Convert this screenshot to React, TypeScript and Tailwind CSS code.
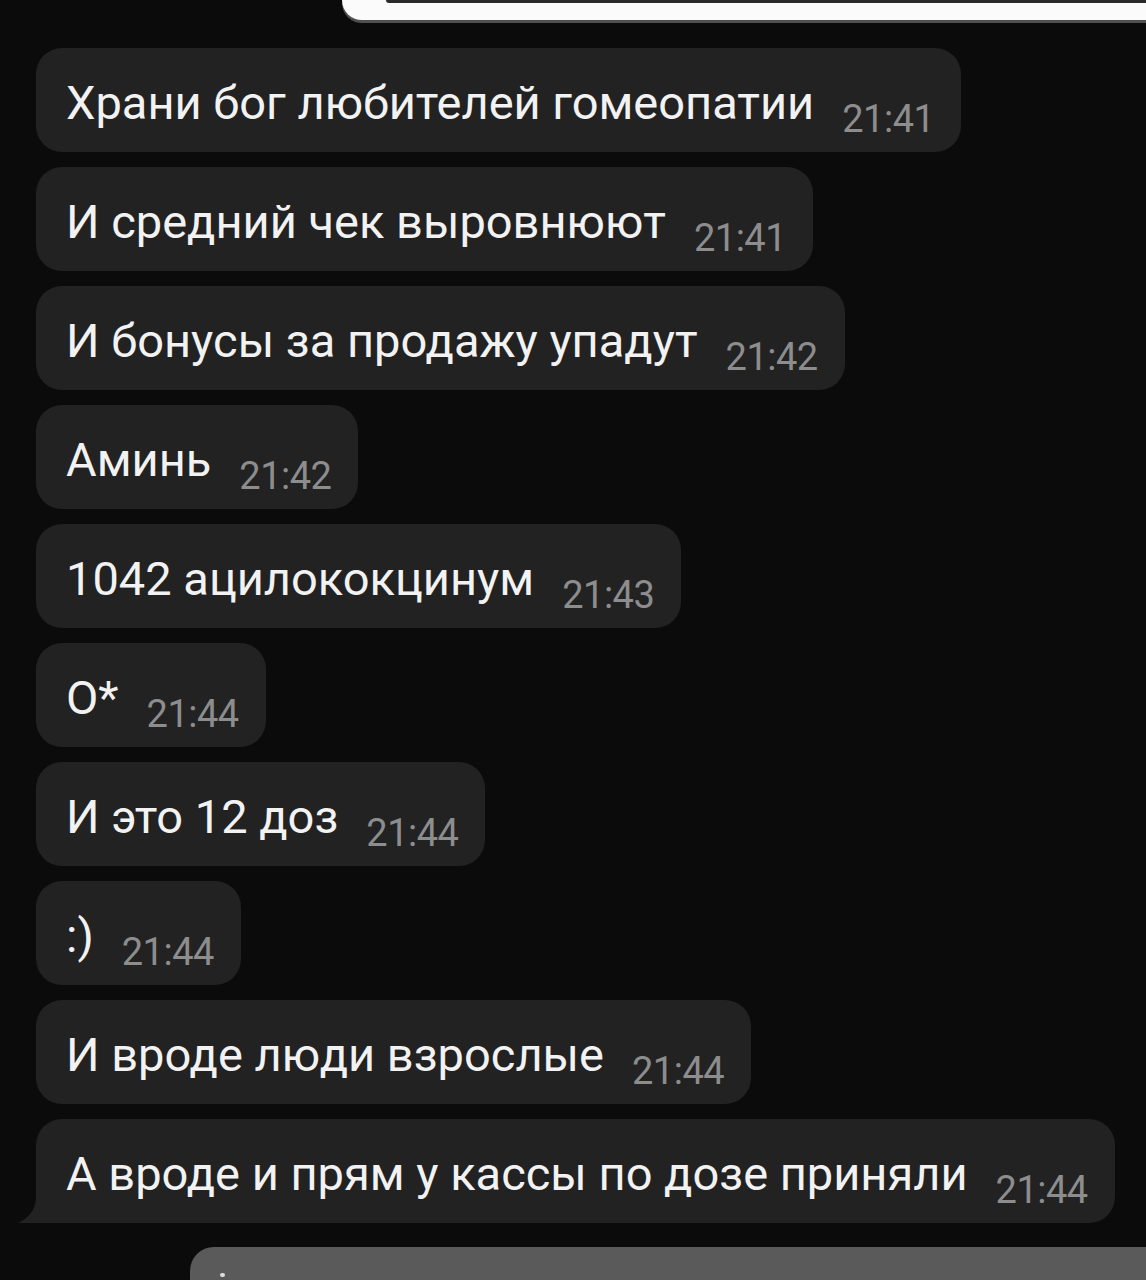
import React from "react";

const msgs: { text: string; time: string }[] = [
  { text: "Храни бог любителей гомеопатии", time: "21:41" },
  { text: "И средний чек выровнюют", time: "21:41" },
  { text: "И бонусы за продажу упадут", time: "21:42" },
  { text: "Аминь", time: "21:42" },
  { text: "1042 ацилококцинум", time: "21:43" },
  { text: "О*", time: "21:44" },
  { text: "И это 12 доз", time: "21:44" },
  { text: ":)", time: "21:44" },
  { text: "И вроде люди взрослые", time: "21:44" },
  { text: "А вроде и прям у кассы по дозе приняли", time: "21:44" },
];

export default function App() {
  return (
    <div
      className="w-[1146px] h-[1280px] overflow-hidden bg-[#0b0b0b] flex flex-col"
      style={{ fontFamily: "Roboto, 'Noto Sans', sans-serif" }}
    >
      <div className="ml-[342px] h-[25px] bg-[#fbfbfb] rounded-bl-[24px] shadow-[0_3px_0_#505050] flex flex-col">
        <div className="ml-[44px] h-[3px] bg-[#2a2a2a] rounded-bl-[6px]" />
      </div>
      <div className="flex flex-col gap-[15px] pt-[28px]">
        {msgs.map((m, i) => {
          const last = i === msgs.length - 1;
          return (
            <div key={i} className="pl-[36px] flex">
              <div
                className={
                  "relative h-[104px] bg-[#222222] flex items-start pt-[31px] pl-[30px] pr-[27px] rounded-[26px] " +
                  (last ? "rounded-bl-none" : "")
                }
              >
                <span className="text-[47px] leading-none text-[#f2f2f2] whitespace-nowrap">
                  {m.text}
                  <span className="ml-[28px] text-[38px] text-[#8d8d8d] align-[-13px] tracking-[-0.5px]">
                    {m.time}
                  </span>
                </span>
                {last && (
                  <svg
                    className="absolute left-[-18px] bottom-0"
                    width="20"
                    height="26"
                    viewBox="0 0 20 26"
                  >
                    <path d="M18 0 C18 12 11 21 0 26 L20 26 L20 0 Z" fill="#222222" />
                  </svg>
                )}
              </div>
            </div>
          );
        })}
      </div>
      <div className="mt-[24px] ml-[190px] h-[40px] bg-[#5a5a5a] rounded-tl-[24px] relative">
        <div className="absolute left-[30px] top-[26px] w-[5px] h-[4px] bg-[#dcdcdc] rounded-full" />
      </div>
    </div>
  );
}
